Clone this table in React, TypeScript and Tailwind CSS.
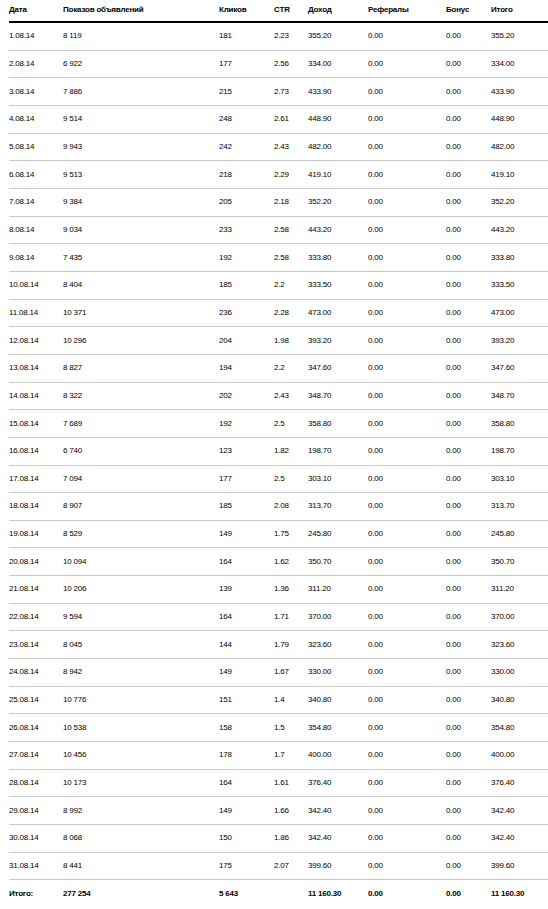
const rows: [string, string, number, string, string][] = [
  ["1.08.14", "8 119", 181, "2.23", "355.20"],
  ["2.08.14", "6 922", 177, "2.56", "334.00"],
  ["3.08.14", "7 886", 215, "2.73", "433.90"],
  ["4.08.14", "9 514", 248, "2.61", "448.90"],
  ["5.08.14", "9 943", 242, "2.43", "482.00"],
  ["6.08.14", "9 513", 218, "2.29", "419.10"],
  ["7.08.14", "9 384", 205, "2.18", "352.20"],
  ["8.08.14", "9 034", 233, "2.58", "443.20"],
  ["9.08.14", "7 435", 192, "2.58", "333.80"],
  ["10.08.14", "8 404", 185, "2.2", "333.50"],
  ["11.08.14", "10 371", 236, "2.28", "473.00"],
  ["12.08.14", "10 296", 204, "1.98", "393.20"],
  ["13.08.14", "8 827", 194, "2.2", "347.60"],
  ["14.08.14", "8 322", 202, "2.43", "348.70"],
  ["15.08.14", "7 689", 192, "2.5", "358.80"],
  ["16.08.14", "6 740", 123, "1.82", "198.70"],
  ["17.08.14", "7 094", 177, "2.5", "303.10"],
  ["18.08.14", "8 907", 185, "2.08", "313.70"],
  ["19.08.14", "8 529", 149, "1.75", "245.80"],
  ["20.08.14", "10 094", 164, "1.62", "350.70"],
  ["21.08.14", "10 206", 139, "1.36", "311.20"],
  ["22.08.14", "9 594", 164, "1.71", "370.00"],
  ["23.08.14", "8 045", 144, "1.79", "323.60"],
  ["24.08.14", "8 942", 149, "1.67", "330.00"],
  ["25.08.14", "10 776", 151, "1.4", "340.80"],
  ["26.08.14", "10 538", 158, "1.5", "354.80"],
  ["27.08.14", "10 456", 178, "1.7", "400.00"],
  ["28.08.14", "10 173", 164, "1.61", "376.40"],
  ["29.08.14", "8 992", 149, "1.66", "342.40"],
  ["30.08.14", "8 068", 150, "1.86", "342.40"],
  ["31.08.14", "8 441", 175, "2.07", "399.60"],
];

const cols = "grid grid-cols-[54px_156px_55px_34px_60px_78px_45px_1fr] items-center";

export default function App() {
  return (
    <div className="min-h-screen bg-white pl-[9px] text-[8px] tracking-[-0.2px] text-black [font-family:'Liberation_Sans',Arial,sans-serif]">
      <div className={`${cols} h-[23px] border-b-2 border-black pb-[1px] font-bold`}>
        <div>Дата</div>
        <div>Показов объявлений</div>
        <div>Кликов</div>
        <div>CTR</div>
        <div>Доход</div>
        <div>Рефералы</div>
        <div>Бонус</div>
        <div>Итого</div>
      </div>
      {rows.map(([date, views, clicks, ctr, income]) => (
        <div key={date} className={`${cols} h-[27.67px] border-b border-[#c8c8c8]`}>
          <div>{date}</div>
          <div>{views}</div>
          <div>{clicks}</div>
          <div>{ctr}</div>
          <div>{income}</div>
          <div>0.00</div>
          <div>0.00</div>
          <div>{income}</div>
        </div>
      ))}
      <div className={`${cols} h-[27px] font-bold`}>
        <div>Итого:</div>
        <div>277 254</div>
        <div>5 643</div>
        <div></div>
        <div>11 160.30</div>
        <div>0.00</div>
        <div>0.00</div>
        <div>11 160.30</div>
      </div>
    </div>
  );
}
